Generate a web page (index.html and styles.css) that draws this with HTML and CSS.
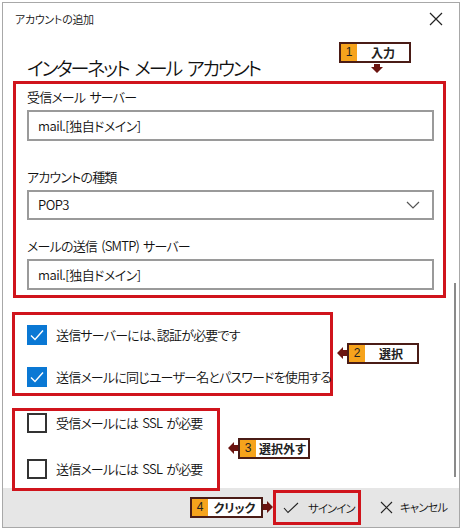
FILE: index.html
```html
<!DOCTYPE html>
<html>

<head>
	<title>アカウントの追加</title>
	<link rel="stylesheet" href="styles.css">
</head>

<body>
	<div class="window">
		<div class="titlebar">
			<span class="title">アカウントの追加</span>
			<svg class="close" width="14" height="14" viewBox="0 0 14 14">
				<path d="M1 1L13 13M13 1L1 13" stroke="#222" stroke-width="1.2" fill="none" />
			</svg>
		</div>

		<div class="content">
			<h2 class="heading">インターネット メール アカウント</h2>

			<div class="mark servers">
				<label class="field-label first">受信メール サーバー</label>
				<input class="field" type="text" value="mail.[独自ドメイン]">

				<label class="field-label">アカウントの種類</label>
				<div class="field select">
					<span>POP3</span>
					<svg width="14" height="8" viewBox="0 0 14 8">
						<path d="M1 1L7 7L13 1" stroke="#555" stroke-width="1.2" fill="none" />
					</svg>
				</div>

				<label class="field-label smtp">メールの送信 (SMTP) サーバー</label>
				<input class="field" type="text" value="mail.[独自ドメイン]">
			</div>

			<div class="mark checks">
				<div class="check-row">
					<span class="box checked">
						<svg width="20" height="20" viewBox="0 0 20 20">
							<path d="M4 10.5L8 14.5L16 5.5" stroke="#fff" stroke-width="1.4" fill="none" />
						</svg>
					</span>
					<span>送信サーバーには、認証が必要です</span>
				</div>
				<div class="check-row">
					<span class="box checked">
						<svg width="20" height="20" viewBox="0 0 20 20">
							<path d="M4 10.5L8 14.5L16 5.5" stroke="#fff" stroke-width="1.4" fill="none" />
						</svg>
					</span>
					<span>送信メールに同じユーザー名とパスワードを使用する</span>
				</div>
			</div>

			<div class="mark ssl">
				<div class="check-row">
					<span class="box"></span>
					<span>受信メールには SSL が必要</span>
				</div>
				<div class="check-row">
					<span class="box"></span>
					<span>送信メールには SSL が必要</span>
				</div>
			</div>

			<div class="scrollbar"></div>
		</div>

		<div class="footer">
			<button class="btn signin">
				<svg width="16" height="12" viewBox="0 0 16 12">
					<path d="M1 6L5 10.5L15 1" stroke="#222" stroke-width="1.1" fill="none" />
				</svg>
				<span>サインイン</span>
			</button>
			<button class="btn cancel">
				<svg width="13" height="13" viewBox="0 0 13 13">
					<path d="M1 1L12 12M12 1L1 12" stroke="#222" stroke-width="1.1" fill="none" />
				</svg>
				<span>キャンセル</span>
			</button>
		</div>
	</div>

	<!-- callouts -->
	<div class="callout c1"><span class="num">1</span><span class="txt center">入力</span></div>
	<svg class="arrow a1" width="12" height="9" viewBox="0 0 12 9">
		<polygon points="3,0 9,0 9,3 12,3 6,9 0,3 3,3" fill="#6b1410" />
	</svg>

	<div class="callout c2"><span class="num">2</span><span class="txt center">選択</span></div>
	<svg class="arrow a2" width="10" height="12" viewBox="0 0 10 12">
		<polygon points="0,6 6,0 6,3 10,3 10,9 6,9 6,12" fill="#6b1410" />
	</svg>

	<div class="callout c3"><span class="num">3</span><span class="txt">選択外す</span></div>
	<svg class="arrow a3" width="10" height="12" viewBox="0 0 10 12">
		<polygon points="0,6 6,0 6,3 10,3 10,9 6,9 6,12" fill="#6b1410" />
	</svg>

	<div class="callout c4"><span class="num">4</span><span class="txt center">クリック</span></div>
	<svg class="arrow a4" width="10" height="12" viewBox="0 0 10 12">
		<polygon points="10,6 4,0 4,3 0,3 0,9 4,9 4,12" fill="#6b1410" />
	</svg>
</body>

</html>
```

FILE: styles.css
```css
body {
	margin: 0;
	font-family: "Noto Sans CJK JP", "Noto Sans", sans-serif;
	font-feature-settings: "palt";
	font-weight: 350;
	background-color: #fff;
	color: #111;
}

.window {
	position: relative;
	margin: 2px;
	width: 456px;
	height: 524px;
	border: 1px solid #a8a8a8;
	background-color: #fff;
	display: flex;
	flex-direction: column;
}

.titlebar {
	height: 32px;
	display: flex;
	align-items: center;
	justify-content: space-between;
	padding: 0 16px 0 12px;
}

.title {
	font-size: 11px;
	letter-spacing: -0.3px;
}

.close {
	margin-top: 1px;
}

.content {
	position: relative;
	flex: 1;
	padding: 0 10px;
	z-index: 1;
	white-space: nowrap;
}

.heading {
	margin: 20px 0 0 14px;
	font-size: 19px;
	font-weight: 350;
	letter-spacing: -2.2px;
	word-spacing: 4px;
	line-height: 26px;
	color: #111;
}

.mark {
	border: 3px solid #d0141c;
	box-sizing: border-box;
}

.servers {
	width: 433px;
	padding: 3px 0 5px 11px;
	display: flex;
	flex-direction: column;
}

.field-label {
	font-size: 13px;
	letter-spacing: -0.8px;
	word-spacing: 2px;
	line-height: 20px;
	margin-top: 26px;
}

.field-label.first {
	margin-top: 0;
}

.field-label.smtp {
	margin-top: 16px;
}

.field {
	box-sizing: border-box;
	width: 407px;
	height: 31px;
	margin-top: 3px;
	border: 2px solid #9a9a9a;
	padding: 0 9px;
	font-family: inherit;
	font-size: 13px;
	font-weight: 350;
	letter-spacing: -0.5px;
	font-feature-settings: "palt";
	color: #111;
	background-color: #fff;
}

.select {
	height: 30px;
	display: flex;
	align-items: center;
	justify-content: space-between;
	padding-right: 12px;
}

.checks {
	width: 321px;
	margin: 14px 0 0 -1px;
	padding: 10px 0 6px 12px;
}

.ssl {
	position: relative;
	width: 208px;
	margin: 12px 0 0 -1px;
	padding: 2px 0 9px 12px;
}

.check-row {
	display: flex;
	align-items: center;
	gap: 9px;
	height: 20px;
	font-size: 13px;
	letter-spacing: -0.8px;
	word-spacing: 2px;
}

.checks .check-row + .check-row {
	margin-top: 22px;
}

.ssl .check-row + .check-row {
	margin-top: 26px;
}

.box {
	box-sizing: border-box;
	width: 20px;
	height: 20px;
	border: 2px solid #333;
	flex-shrink: 0;
}

.box.checked {
	border: none;
	background-color: #0a78d4;
}

.box svg {
	display: block;
}

.scrollbar {
	position: absolute;
	left: 451px;
	top: 248px;
	width: 2px;
	height: 194px;
	background-color: #8a8a8a;
}

.footer {
	height: 40px;
	margin-top: -3px;
	background-color: #e6e6e6;
	display: flex;
	align-items: center;
	padding-left: 270px;
}

.btn {
	display: flex;
	align-items: center;
	gap: 9px;
	border: none;
	background: none;
	font-family: inherit;
	font-size: 11.5px;
	font-weight: 350;
	letter-spacing: -1px;
	font-feature-settings: "palt";
	white-space: nowrap;
	color: #111;
	padding: 0;
	height: 35px;
}

.signin {
	box-sizing: border-box;
	width: 88px;
	border: 3px solid #d0141c;
	background-color: #e3e3e3;
	margin-top: 1px;
	padding-left: 7px;
}

.cancel {
	margin-left: 19px;
	gap: 7px;
}

.callout {
	position: absolute;
	box-sizing: border-box;
	height: 21px;
	border: 2px solid #4a1c16;
	background-color: #fff;
	display: flex;
	font-size: 12px;
	font-weight: bold;
	white-space: nowrap;
	color: #222;
	z-index: 3;
}

.num {
	width: 16px;
	background-color: #f6a31c;
	text-align: center;
	line-height: 17px;
	font-weight: normal;
	font-family: "Liberation Sans", sans-serif;
	font-size: 12px;
}

.txt {
	line-height: 17px;
	padding-left: 3px;
}

.txt.center {
	flex: 1;
	text-align: center;
	padding-left: 0;
}

.c1 {
	left: 339px;
	top: 42px;
	width: 72px;
}

.c2 {
	left: 347px;
	top: 343px;
	width: 72px;
}

.c3 {
	left: 238px;
	top: 438px;
	width: 72px;
}

.c4 {
	left: 190px;
	top: 497px;
	width: 73px;
}

.arrow {
	position: absolute;
	z-index: 3;
}

.a1 {
	left: 371px;
	top: 64px;
}

.a2 {
	left: 337px;
	top: 347px;
}

.a3 {
	left: 228px;
	top: 442px;
}

.a4 {
	left: 263px;
	top: 501px;
}
```
